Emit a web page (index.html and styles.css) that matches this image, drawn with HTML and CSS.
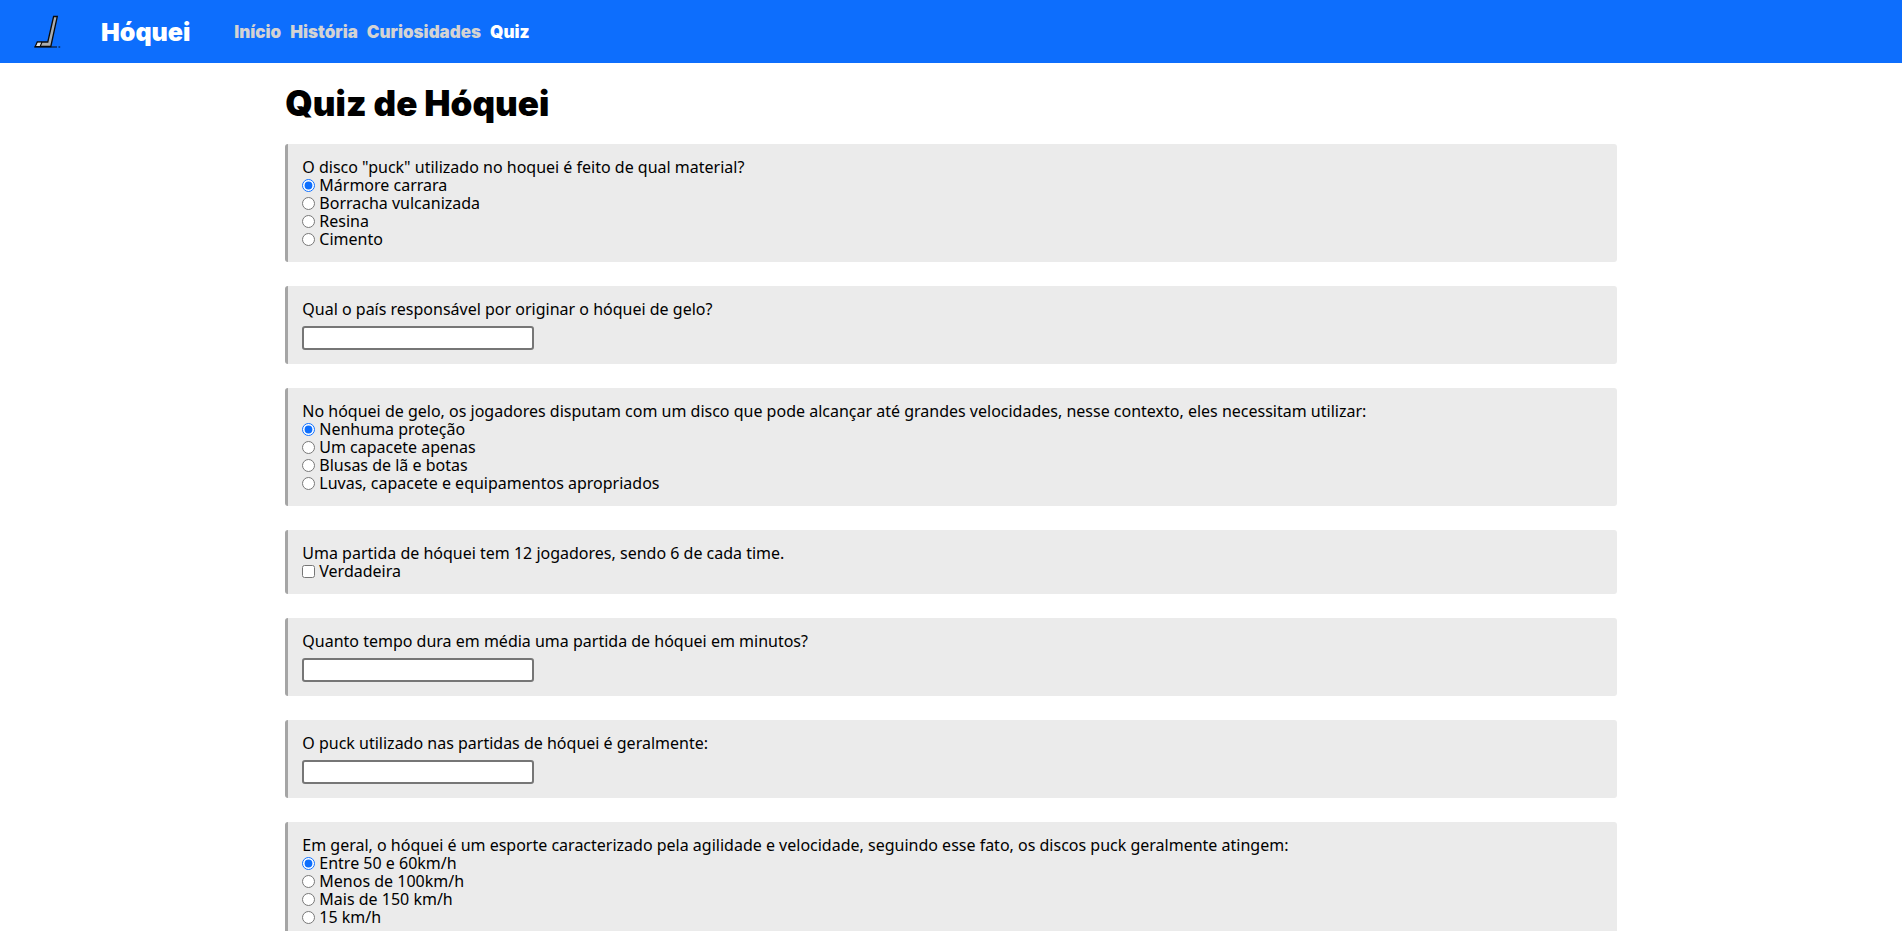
FILE: index.html
```html
<!DOCTYPE html>
<html lang="pt-BR">
<head>
<meta charset="utf-8">
<meta name="viewport" content="width=device-width, initial-scale=1">
<title>Quiz de Hóquei</title>
<link rel="stylesheet" href="styles.css">
</head>
<body>
<header class="navbar">
  <svg class="logo" viewBox="0 0 28 34" aria-hidden="true">
    <path d="M19.600 1.500h3.700L16.800 31.500H1.300l2-4.500h10.500z" fill="#a9adb0" stroke="#0b0b0b" stroke-width="1.300"/>
    <path d="M3.800 27.700H7.300L6 31H2.200z" fill="#e4e6e8"/>
    <path d="M8 27L6.200 31.500M0.300 32H23M24.500 32h1.700" fill="none" stroke="#0b0b0b" stroke-width="1.100"/>
  </svg>
  <span class="brand">Hóquei</span>
  <nav class="links">
    <a href="#inicio">Início</a>
    <a href="#historia">História</a>
    <a href="#curiosidades">Curiosidades</a>
    <a href="#quiz" class="active">Quiz</a>
  </nav>
</header>
<main class="container">
  <h1 class="title">Quiz de Hóquei</h1>
  <form class="quiz">
    <div class="card" role="group" aria-labelledby="t1">
      <div class="question" id="t1">O disco "puck" utilizado no hoquei é feito de qual material?</div>
      <label class="option"><input type="radio" name="q1" checked>Mármore carrara</label>
      <label class="option"><input type="radio" name="q1">Borracha vulcanizada</label>
      <label class="option"><input type="radio" name="q1">Resina</label>
      <label class="option"><input type="radio" name="q1">Cimento</label>
    </div>
    <div class="card">
      <label class="question" for="q2">Qual o país responsável por originar o hóquei de gelo?</label>
      <input class="answer" type="text" id="q2">
    </div>
    <div class="card" role="group" aria-labelledby="t3">
      <div class="question" id="t3">No hóquei de gelo, os jogadores disputam com um disco que pode alcançar até grandes velocidades, nesse contexto, eles necessitam utilizar:</div>
      <label class="option"><input type="radio" name="q3" checked>Nenhuma proteção</label>
      <label class="option"><input type="radio" name="q3">Um capacete apenas</label>
      <label class="option"><input type="radio" name="q3">Blusas de lã e botas</label>
      <label class="option"><input type="radio" name="q3">Luvas, capacete e equipamentos apropriados</label>
    </div>
    <div class="card" role="group" aria-labelledby="t4">
      <div class="question" id="t4">Uma partida de hóquei tem 12 jogadores, sendo 6 de cada time.</div>
      <label class="option"><input type="checkbox" name="q4">Verdadeira</label>
    </div>
    <div class="card">
      <label class="question" for="q5">Quanto tempo dura em média uma partida de hóquei em minutos?</label>
      <input class="answer" type="text" id="q5">
    </div>
    <div class="card">
      <label class="question" for="q6">O puck utilizado nas partidas de hóquei é geralmente:</label>
      <input class="answer" type="text" id="q6">
    </div>
    <div class="card" role="group" aria-labelledby="t7">
      <div class="question" id="t7">Em geral, o hóquei é um esporte caracterizado pela agilidade e velocidade, seguindo esse fato, os discos puck geralmente atingem:</div>
      <label class="option"><input type="radio" name="q7" checked>Entre 50 e 60km/h</label>
      <label class="option"><input type="radio" name="q7">Menos de 100km/h</label>
      <label class="option"><input type="radio" name="q7">Mais de 150 km/h</label>
      <label class="option"><input type="radio" name="q7">15 km/h</label>
    </div>
  </form>
</main>
</body>
</html>
```
FILE: styles.css
```css
* {
  box-sizing: border-box;
}

body {
  margin: 0;
  background: #fff;
  color: #000;
  font-family: "Noto Sans", sans-serif;
  font-size: 16px;
}

.navbar {
  display: flex;
  align-items: center;
  height: 63px;
  padding: 0 34px;
  background: #0d6efd;
  font-family: Inter, sans-serif;
  font-weight: 900;
}

.logo {
  width: 28px;
  height: 34px;
  margin-right: 39px;
}

.brand {
  margin-right: 44px;
  color: #fff;
  font-size: 25px;
}

.links {
  display: flex;
  gap: 9px;
  font-size: 17px;
}

.links a {
  color: #d3d3d3;
  text-decoration: none;
}

.links .active {
  color: #fff;
}

.container {
  width: 70%;
  margin: 0 auto;
}

.title {
  margin: 21px 0;
  font-family: Inter, sans-serif;
  font-size: 35px;
  font-weight: 900;
  line-height: 39px;
}

.quiz {
  display: flex;
  flex-direction: column;
  gap: 24px;
  padding-bottom: 24px;
}

.card {
  padding: 14px;
  border-left: 3px solid #a5a5a5;
  border-radius: 3px;
  background: #ebebeb;
  line-height: 18px;
}

.question {
  display: block;
}

.option {
  display: flex;
  align-items: center;
  gap: 4px;
}

.option input {
  width: 13px;
  height: 13px;
  margin: 0;
  accent-color: #0d6efd;
}

.answer {
  display: block;
  width: 232px;
  height: 24px;
  margin-top: 8px;
  padding: 1px 2px;
  border: 2px solid #767676;
  border-radius: 3px;
  background: #fff;
  font: inherit;
}
```
